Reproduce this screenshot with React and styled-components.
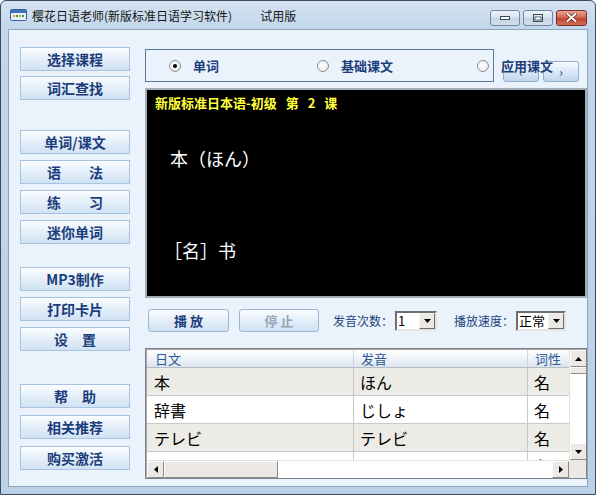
import React from "react";
import styled, { createGlobalStyle } from "styled-components";

const GlobalStyle = createGlobalStyle`
  html, body { margin: 0; padding: 0; }
  body {
    background: #ffffff;
    font-family: "Noto Sans CJK SC", "Noto Sans", sans-serif;
  }
`;

const Window = styled.div`
  width: 596px;
  height: 495px;
  box-sizing: border-box;
  border: 1px solid #3b4a5c;
  border-radius: 6px 6px 0 0;
  background: linear-gradient(180deg, #d4e3f2 0px, #c3d6ea 28px, #bcd0e6 100%);
  display: flex;
  flex-direction: column;
  overflow: hidden;
`;

const TitleBar = styled.div`
  height: 28px;
  display: flex;
  align-items: center;
  padding: 0 8px 0 9px;
  flex-shrink: 0;
`;

const TitleText = styled.span`
  font-size: 12px;
  color: #141414;
  margin-left: ${(p) => p.$gap}px;
  white-space: nowrap;
`;

const Controls = styled.div`
  margin-left: auto;
  display: flex;
  gap: 3px;
  margin-top: 5px;
`;

const CtrlButton = styled.div`
  width: ${(p) => p.$w}px;
  height: 16px;
  box-sizing: border-box;
  border: 1px solid ${(p) => (p.$close ? "#7a2e24" : "#7286a0")};
  border-radius: 3px;
  background: ${(p) =>
    p.$close
      ? "linear-gradient(180deg, #e9a493 0%, #d46a55 45%, #c2412b 55%, #d0705a 100%)"
      : "linear-gradient(180deg, #eef3f9 0%, #d9e4f0 45%, #c5d4e5 55%, #d3dfec 100%)"};
  display: flex;
  align-items: center;
  justify-content: center;
`;

const Client = styled.div`
  flex: 1;
  margin: 0 7px 7px;
  border: 1px solid #8fa5bd;
  background: #eaf3fb;
  display: flex;
`;

const Sidebar = styled.div`
  width: 110px;
  padding: 17px 0 0 11px;
  display: flex;
  flex-direction: column;
`;

const Group = styled.div`
  display: flex;
  flex-direction: column;
  gap: ${(p) => p.$gap}px;
  margin-top: ${(p) => p.$top}px;
`;

const SideButton = styled.div`
  height: 24px;
  box-sizing: border-box;
  border: 1px solid #a6c4e2;
  background: linear-gradient(180deg, #fbfdff 0%, #e6f0fa 45%, #d0e2f3 100%);
  color: #1b3d7a;
  font-size: 14px;
  font-weight: 700;
  display: flex;
  align-items: center;
  justify-content: center;
  white-space: pre;
`;

const Main = styled.div`
  width: 442px;
  margin-left: 15px;
  padding-top: 19px;
  display: flex;
  flex-direction: column;
`;

const RadioRow = styled.div`
  display: flex;
  align-items: flex-end;
  height: 33px;
`;

const RadioBox = styled.div`
  width: 349px;
  height: 33px;
  box-sizing: border-box;
  border: 1px solid #5f7d9a;
  display: flex;
  align-items: center;
  padding-left: 23px;
`;

const RadioItem = styled.div`
  width: ${(p) => (p.$w ? `${p.$w}px` : "auto")};
  flex-shrink: 0;
  display: flex;
  align-items: center;
  gap: 12px;
  position: relative;
  z-index: 1;
  font-size: 13px;
  font-weight: 700;
  color: #1b3d7a;
  white-space: nowrap;
`;

const RadioDot = styled.span`
  width: 12px;
  height: 12px;
  box-sizing: border-box;
  border-radius: 50%;
  border: 1px solid #8a8f96;
  background: radial-gradient(circle at 40% 40%, #ffffff 0%, #f0f0f0 60%, #d6d6d6 100%);
  display: flex;
  align-items: center;
  justify-content: center;
  &::after {
    content: "";
    width: 4px;
    height: 4px;
    border-radius: 50%;
    background: ${(p) => (p.$on ? "#000" : "transparent")};
  }
`;

const NavGroup = styled.div`
  display: flex;
  gap: 4px;
  margin-left: 9px;
`;

const NavButton = styled.div`
  width: 36px;
  height: 21px;
  box-sizing: border-box;
  border: 1px solid #8fb0d0;
  border-radius: 3px;
  background: linear-gradient(180deg, #f6faff 0%, #dbe9f6 50%, #bfd6ec 100%);
  color: #1b3d7a;
  font-size: 12px;
  display: flex;
  align-items: flex-end;
  justify-content: center;
  padding-bottom: 1px;
`;

const Screen = styled.div`
  margin-top: 6px;
  height: 210px;
  box-sizing: border-box;
  border: 2px solid #a3adb8;
  background: #000;
  padding: 5px 0 0 8px;
  display: flex;
  flex-direction: column;
`;

const ScreenTitle = styled.div`
  font-size: 13px;
  font-weight: 700;
  color: #ffff3c;
  word-spacing: 6px;
  line-height: 16px;
  white-space: pre;
`;

const ScreenLine = styled.div`
  font-size: 18px;
  color: #ffffff;
  margin-top: ${(p) => p.$top}px;
  margin-left: ${(p) => p.$left}px;
  line-height: 22px;
  white-space: pre;
`;

const ToolRow = styled.div`
  margin-top: 11px;
  height: 23px;
  display: flex;
  align-items: center;
  padding-left: 3px;
`;

const PlayButton = styled.div`
  width: ${(p) => p.$w}px;
  height: 23px;
  box-sizing: border-box;
  border: 1px solid #9cb8d4;
  border-radius: 3px;
  margin-right: ${(p) => p.$mr}px;
  background: linear-gradient(180deg, #fbfdff 0%, #e4eef8 50%, #cfe1f2 100%);
  color: ${(p) => (p.$disabled ? "#97a6b8" : "#1b3d7a")};
  font-size: 13px;
  font-weight: 700;
  display: flex;
  align-items: center;
  justify-content: center;
  white-space: pre;
`;

const Label = styled.span`
  font-size: 12px;
  color: #20427a;
  margin-left: ${(p) => p.$ml}px;
  margin-right: 2px;
  white-space: nowrap;
`;

const Select = styled.div`
  width: ${(p) => p.$w}px;
  height: 20px;
  box-sizing: border-box;
  border: 2px solid;
  border-color: #6e6e6e #e4e4e4 #e4e4e4 #6e6e6e;
  background: #fff;
  display: flex;
  align-items: center;
  justify-content: space-between;
  font-size: 13px;
  color: #000;
  padding-left: 1px;
`;

const SelectArrow = styled.div`
  width: 16px;
  height: 16px;
  box-sizing: border-box;
  border: 1px solid;
  border-color: #f4f4f4 #6a6a6a #6a6a6a #f4f4f4;
  background: #ece9e4;
  display: flex;
  align-items: center;
  justify-content: center;
`;

const Table = styled.div`
  margin-top: 16px;
  height: 131px;
  box-sizing: border-box;
  border: 1px solid #7c848d;
  box-shadow: inset 1px 1px 0 #a8a8a8;
  padding: 1px 0 0 1px;
  background: #fff;
  display: grid;
  grid-template-columns: 1fr 17px;
  grid-template-rows: 1fr 18px;
  overflow: hidden;
`;

const Viewport = styled.div`
  overflow: hidden;
  display: flex;
  flex-direction: column;
`;

const Row = styled.div`
  display: grid;
  grid-template-columns: 206px 174px 60px;
  height: ${(p) => (p.$head ? 18 : 28)}px;
  flex-shrink: 0;
  box-sizing: border-box;
  border-bottom: 1px solid ${(p) => (p.$head ? "#b6bcc4" : "#c9c9c9")};
  background: ${(p) =>
    p.$head
      ? "linear-gradient(180deg, #ffffff 0%, #eef3f8 50%, #dbe4ed 100%)"
      : p.$alt
      ? "#ecebe5"
      : "#ffffff"};
`;

const Cell = styled.div`
  box-sizing: border-box;
  padding-left: ${(p) => (p.$head ? 7 : 6)}px;
  border-left: 1px solid ${(p) => (p.$first ? "transparent" : p.$head ? "#d2d6dc" : "#c9c9c9")};
  display: flex;
  align-items: ${(p) => (p.$head ? "center" : "flex-start")};
  padding-top: ${(p) => (p.$head ? 0 : 3)}px;
  font-size: ${(p) => (p.$head ? 13 : 16)}px;
  line-height: ${(p) => (p.$head ? "18px" : "22px")};
  color: ${(p) => (p.$head ? "#2c5a98" : "#000")};
  font-family: ${(p) =>
    p.$head ? '"Noto Sans CJK SC", sans-serif' : '"Noto Sans CJK JP", sans-serif'};
  white-space: nowrap;
  overflow: hidden;
`;

const VScroll = styled.div`
  display: flex;
  flex-direction: column;
  background: #fafafa;
  border-left: 1px solid #e2e2e2;
`;

const HScroll = styled.div`
  display: flex;
  background: #fafafa;
  border-top: 1px solid #e2e2e2;
`;

const ScrollBtn = styled.div`
  width: ${(p) => p.$w}px;
  height: ${(p) => p.$h}px;
  flex-shrink: 0;
  box-sizing: border-box;
  border: 1px solid;
  border-color: #fdfdfd #8a8a8a #8a8a8a #fdfdfd;
  background: #ece9e4;
  display: flex;
  align-items: center;
  justify-content: center;
`;

const Track = styled.div`
  flex: 1;
  background: #ffffff;
`;

const Corner = styled.div`
  background: #ece9e4;
`;

const Tri = ({ dir }) => {
  const pts = {
    up: "0,4 7,4 3.5,0",
    down: "0,0 7,0 3.5,4",
    left: "4,0 4,7 0,3.5",
    right: "0,0 0,7 4,3.5",
  }[dir];
  const vertical = dir === "up" || dir === "down";
  return (
    <svg width={vertical ? 7 : 4} height={vertical ? 4 : 7} viewBox={vertical ? "0 0 7 4" : "0 0 4 7"}>
      <polygon points={pts} fill="#000" />
    </svg>
  );
};

const AppIcon = () => (
  <svg width="17" height="12" viewBox="0 0 17 12">
    <rect x="0.5" y="0.5" width="16" height="11" rx="1" fill="#e8f1fb" stroke="#2f5f9e" />
    <rect x="1" y="1" width="15" height="3" fill="#3d72b8" />
    <rect x="3" y="6" width="2" height="2" fill="#e0a020" />
    <rect x="6" y="6" width="2" height="2" fill="#3c9c3c" />
    <rect x="9" y="6" width="2" height="2" fill="#e0a020" />
    <rect x="12" y="6" width="2" height="2" fill="#3c9c3c" />
  </svg>
);

const words = [
  ["本", "ほん", "名"],
  ["辞書", "じしょ", "名"],
  ["テレビ", "テレビ", "名"],
  ["パソコン", "パソコン", "名"],
];

const groups = [
  { top: 0, gap: 5, items: ["选择课程", "词汇查找"] },
  { top: 30, gap: 6, items: ["单词/课文", "语　　法", "练　　习", "迷你单词"] },
  { top: 23, gap: 6, items: ["MP3制作", "打印卡片", "设　置"] },
  { top: 33, gap: 7, items: ["帮　助", "相关推荐", "购买激活"] },
];

export default function App() {
  return (
    <>
      <GlobalStyle />
      <Window>
        <TitleBar>
          <AppIcon />
          <TitleText $gap={5}>樱花日语老师(新版标准日语学习软件)</TitleText>
          <TitleText $gap={28}>试用版</TitleText>
          <Controls>
            <CtrlButton $w={30}>
              <svg width="10" height="4" viewBox="0 0 10 4">
                <rect x="0.5" y="0.5" width="9" height="3" fill="#fff" stroke="#3d4a5a" />
              </svg>
            </CtrlButton>
            <CtrlButton $w={30}>
              <svg width="10" height="8" viewBox="0 0 10 8">
                <rect x="0.5" y="0.5" width="9" height="7" fill="none" stroke="#3d4a5a" />
                <rect x="2" y="3" width="6" height="3" fill="#fff" stroke="#3d4a5a" strokeWidth="0.8" />
              </svg>
            </CtrlButton>
            <CtrlButton $w={31} $close>
              <svg width="11" height="9" viewBox="0 0 11 9">
                <path d="M1.5 1 L9.5 8 M9.5 1 L1.5 8" stroke="#5a1a10" strokeWidth="3.2" strokeLinecap="round" />
                <path d="M1.5 1 L9.5 8 M9.5 1 L1.5 8" stroke="#fff" strokeWidth="2" strokeLinecap="round" />
              </svg>
            </CtrlButton>
          </Controls>
        </TitleBar>

        <Client>
          <Sidebar>
            {groups.map((g, i) => (
              <Group key={i} $top={g.top} $gap={g.gap}>
                {g.items.map((t) => (
                  <SideButton key={t}>{t}</SideButton>
                ))}
              </Group>
            ))}
          </Sidebar>

          <Main>
            <RadioRow>
              <RadioBox>
                <RadioItem $w={148}>
                  <RadioDot $on />
                  单词
                </RadioItem>
                <RadioItem $w={160}>
                  <RadioDot />
                  基础课文
                </RadioItem>
                <RadioItem>
                  <RadioDot />
                  应用课文
                </RadioItem>
              </RadioBox>
              <NavGroup>
                <NavButton>‹</NavButton>
                <NavButton>›</NavButton>
              </NavGroup>
            </RadioRow>

            <Screen>
              <ScreenTitle>新版标准日本语-初级 第 2 课</ScreenTitle>
              <ScreenLine $top={36} $left={15}>本（ほん）</ScreenLine>
              <ScreenLine $top={70} $left={9}>［名］书</ScreenLine>
            </Screen>

            <ToolRow>
              <PlayButton $w={81} $mr={10}>播 放</PlayButton>
              <PlayButton $w={80} $mr={0} $disabled>停 止</PlayButton>
              <Label $ml={14}>发音次数：</Label>
              <Select $w={42}>
                1
                <SelectArrow>
                  <Tri dir="down" />
                </SelectArrow>
              </Select>
              <Label $ml={17}>播放速度：</Label>
              <Select $w={50}>
                正常
                <SelectArrow>
                  <Tri dir="down" />
                </SelectArrow>
              </Select>
            </ToolRow>

            <Table>
              <Viewport>
                <Row $head>
                  <Cell $head $first>日文</Cell>
                  <Cell $head>发音</Cell>
                  <Cell $head>词性</Cell>
                </Row>
                {words.map((w, i) => (
                  <Row key={i} $alt={i % 2 === 0}>
                    <Cell $first>{w[0]}</Cell>
                    <Cell>{w[1]}</Cell>
                    <Cell>{w[2]}</Cell>
                  </Row>
                ))}
              </Viewport>
              <VScroll>
                <ScrollBtn $w={17} $h={17}>
                  <Tri dir="up" />
                </ScrollBtn>
                <ScrollBtn $w={17} $h={7} />
                <Track />
                <ScrollBtn $w={17} $h={17}>
                  <Tri dir="down" />
                </ScrollBtn>
              </VScroll>
              <HScroll>
                <ScrollBtn $w={17} $h={17}>
                  <Tri dir="left" />
                </ScrollBtn>
                <ScrollBtn $w={114} $h={17} />
                <Track />
                <ScrollBtn $w={17} $h={17}>
                  <Tri dir="right" />
                </ScrollBtn>
              </HScroll>
              <Corner />
            </Table>
          </Main>
        </Client>
      </Window>
    </>
  );
}
